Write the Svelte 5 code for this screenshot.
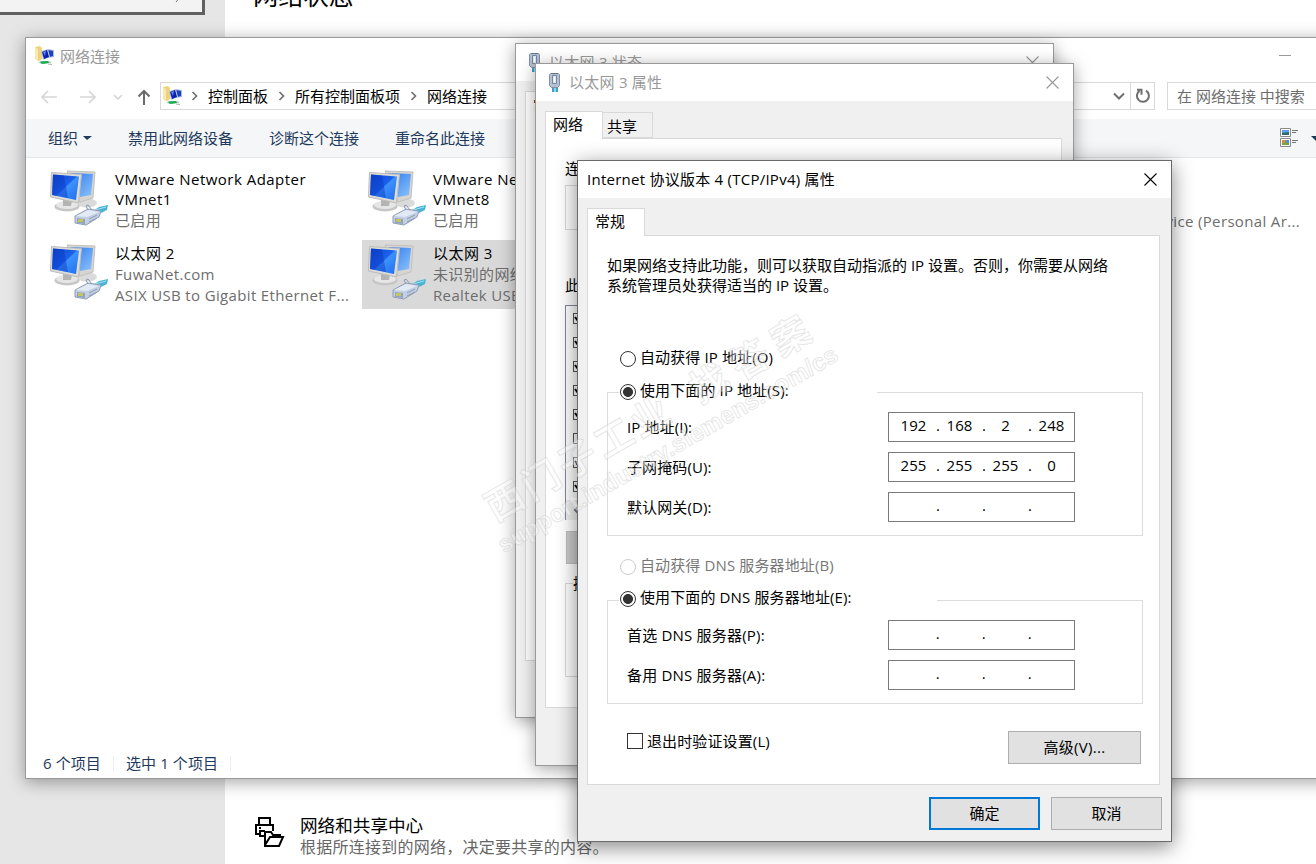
<script>
    const adapters = [
        { col: 1, title: 'VMware Network Adapter VMnet1', lines: ['已启用'] },
        { col: 2, title: 'VMware Network Adapter VMnet8', lines: ['已启用'] },
        { col: 4, title: '蓝牙网络连接', lines: ['未连接', 'Bluetooth Device (Personal Ar...'] },
        { col: 1, title: '以太网 2', lines: ['FuwaNet.com', 'ASIX USB to Gigabit Ethernet F...'] },
        { col: 2, title: '以太网 3', lines: ['未识别的网络', 'Realtek USB GbE Family Contr...'] }
    ];

    let selected = $state('以太网 3');

    const crumbs = ['控制面板', '所有控制面板项', '网络连接'];
    const commands = ['禁用此网络设备', '诊断这个连接', '重命名此连接'];
    const components = [true, true, true, true, true, false, true, true];

    let ipMode = $state('manual');
    let dnsMode = $state('manual');
    let validate = $state(false);

    const ipFields = [
        { label: 'IP 地址(I):', parts: ['192', '168', '2', '248'] },
        { label: '子网掩码(U):', parts: ['255', '255', '255', '0'] },
        { label: '默认网关(D):', parts: ['', '', '', ''] }
    ];
    const dnsFields = [
        { label: '首选 DNS 服务器(P):', parts: ['', '', '', ''] },
        { label: '备用 DNS 服务器(A):', parts: ['', '', '', ''] }
    ];
</script>

{#snippet folderIcon()}
    <svg width="20" height="20" viewBox="0 0 20 20">
        <path d="M0 1l5-1 2 2v11l-3 2-4-2z" fill="#ecd27a" />
        <path d="M0 1l3 2v12l-3-2z" fill="#f8e9ae" />
        <path d="M12 3l7 1v7l-6 1z" fill="#a9bbd6" />
        <path d="M13 4l5 1v5l-4 1z" fill="#1c3fc4" />
        <path d="M6 5l7-2 2 8-7 3z" fill="#b9c8df" />
        <path d="M7 6l5-2 2 7-5 2z" fill="#0a1fae" />
        <path d="M8 6l3-1-1 5z" fill="#5c86ee" />
        <path d="M3 16l6-1 5 0 3 1-2 1-9 1z" fill="#bcc5c9" />
        <path d="M5 15.500l8-.500 1 2-7 1z" fill="#12b04a" />
        <path d="M13 18l4 .500" stroke="#a8b3bb" />
    </svg>
{/snippet}

{#snippet plugIcon()}
    <svg width="14" height="20" viewBox="0 0 14 20">
        <path d="M4 14h6v6H4z" fill="#3d9fc4" />
        <path d="M6 14h2v6H6z" fill="#8fd6ee" />
        <path d="M1.500 2.500l1-1h8l1 1v11l-2 2h-6l-2-2z" fill="#b4c1d3" stroke="#8390a4" />
        <path d="M4.500 3.500h4v8h-4z" fill="#dfe7f1" stroke="#7686a0" />
        <path d="M6.500 5v5" stroke="#fff" />
        <path d="M3 1.500h7" stroke="#66748a" />
    </svg>
{/snippet}

{#snippet adapterIcon()}
    <svg class="adapter__icon" width="62" height="60" viewBox="0 0 62 60">
        <defs>
            <linearGradient id="screen" x1="0" y1="0" x2="1" y2="1">
                <stop offset="0" stop-color="#1246c8" />
                <stop offset=".48" stop-color="#1a62ec" />
                <stop offset=".52" stop-color="#3d92fb" />
                <stop offset="1" stop-color="#1f6df0" />
            </linearGradient>
            <linearGradient id="back" x1="0" y1="0" x2="1" y2="1">
                <stop offset="0" stop-color="#2c77ee" />
                <stop offset="1" stop-color="#8dc4fb" />
            </linearGradient>
        </defs>
        <ellipse cx="39" cy="34" rx="10" ry="4.500" fill="#dadada" />
        <path d="M19 2l28 1-2 26-13 4z" fill="#d6d5d2" stroke="#c2c1be" />
        <path d="M22 4l23 1-2 21-11 2z" fill="url(#back)" />
        <ellipse cx="19" cy="37.500" rx="12.500" ry="5" fill="#c6c6c7" />
        <ellipse cx="19" cy="36" rx="11" ry="4" fill="#e6e6e7" />
        <path d="M15 30l9 2-1 5h-8z" fill="#b4b4b5" />
        <path d="M3.500 3.500l30 2-3 28.500-28-6z" fill="#dddcd9" stroke="#bdbcba" />
        <path d="M5 5.500l26 2-3 23.500-24-5z" fill="url(#screen)" />
        <path d="M5 5.500l11 1 4 22.500-16-3z" fill="#0936c4" opacity=".45" />
        <path d="M45 42l6-4 9-2-1 5-8 4z" fill="#49b5d6" />
        <path d="M47 41l11-3" stroke="#a4e1f1" />
        <path d="M27 47l13-7 13 2-2 6-13 8-11-2z" fill="#c3cfe2" stroke="#909eb6" />
        <path d="M28 47l12-6 11 2-12 5z" fill="#e2eaf5" />
        <path d="M29 49l8 1v5l-8-1z" fill="#93a3bf" />
        <path d="M30 50h5v3h-5z" fill="#c3c65a" />
        <path d="M40 41l-2-4 2-1 4 5M41 50l8-4M41 53l8-4" fill="none" stroke="#8b9bb5" />
    </svg>
{/snippet}

{#snippet closeIcon()}
    <svg width="13" height="13" viewBox="0 0 13 13">
        <path d="M.500 .500l12 12M12.500 .500l-12 12" stroke="currentColor" stroke-width="1.100" />
    </svg>
{/snippet}

{#snippet chevron()}
    <svg class="chevron" width="27" height="12" viewBox="0 0 27 12">
        <path d="M11.500 2l4 4-4 4" fill="none" stroke="#707070" stroke-width="1.700" />
    </svg>
{/snippet}

{#snippet addressField(field)}
    <div class="field">
        <span>{field.label}</span>
        <div class="ip">
            {#each field.parts as part, i}
                {#if i > 0}<i>.</i>{/if}
                <b>{part}</b>
            {/each}
        </div>
    </div>
{/snippet}

<main class="desktop">
    <!-- Página de configuración detrás de las ventanas -->
    <aside class="settings__side">
        <div class="settings__search">
            <svg width="8" height="8" viewBox="0 0 8 8"><path d="M1 7l5-6" stroke="#777" /></svg>
        </div>
    </aside>
    <section class="settings__page">
        <h1>网络状态</h1>
        <div class="settings__link">
            <svg width="32" height="32" viewBox="0 0 32 32" fill="none" stroke="#000" stroke-width="2">
                <path d="M6 9V2h11v7M6 18H3V9h17v6M6 15h6M7 15v5h5" />
                <path d="M6 12h2" />
                <path d="M12 29V16h6l2 3h7v3M12 29l5-8h13l-4 9H12z" />
            </svg>
            <div>
                <h2>网络和共享中心</h2>
                <p>根据所连接到的网络，决定要共享的内容。</p>
            </div>
        </div>
    </section>

    <div class="window explorer">
        <header class="explorer__title">
            {@render folderIcon()}
            <span>网络连接</span>
            <i class="minimize"></i>
        </header>
        <nav class="explorer__nav">
            <svg class="arrows" width="110" height="20" viewBox="0 0 110 20" fill="none" stroke-width="1.700">
                <path d="M17 11H2M8 5l-6 6 6 6" stroke="#d6d6d6" />
                <path d="M40 11h15M49 5l6 6-6 6" stroke="#d6d6d6" />
                <path d="M74 9l4 4 4-4" stroke="#d6d6d6" />
                <path d="M104 19V5M98.500 10.500L104 5l5.500 5.500" stroke="#6b6b6b" stroke-width="2" />
            </svg>
            <div class="address">
                {@render folderIcon()}
                {#each crumbs as crumb}
                    {@render chevron()}
                    <span>{crumb}</span>
                {/each}
                <svg class="address__drop" width="12" height="8" viewBox="0 0 12 8">
                    <path d="M1 1.500l5 5 5-5" fill="none" stroke="#707070" stroke-width="2" />
                </svg>
                <div class="refresh">
                    <svg width="16" height="16" viewBox="0 0 16 16" fill="none" stroke="#6f6f6f" stroke-width="2">
                        <path d="M11 2.700a6 6 0 1 1-6.500 .200M2 1.800h4.500v5" />
                    </svg>
                </div>
            </div>
            <div class="search">在 网络连接 中搜索</div>
        </nav>
        <div class="explorer__commands">
            <span>组织<i class="caret"></i></span>
            {#each commands as command}
                <span>{command}</span>
            {/each}
            <svg class="view" width="19" height="19" viewBox="0 0 19 19">
                <path d="M.500 .500h10v8H.500zM.500 10.500h10v8H.500z" fill="#fff" stroke="#8a8a8a" />
                <path d="M2 2h7v5H2z" fill="#5aa0e8" />
                <path d="M2 5l7-1v3H2z" fill="#2d6a6c" />
                <path d="M2 12h7v5H2z" fill="#70a844" />
                <path d="M2 12h3v3H2z" fill="#e08a3c" />
                <path d="M6 12h3v3H6z" fill="#5a8be0" />
                <path d="M12 2.500h6M12 4.500h4M12 12.500h6M12 14.500h4" stroke="#777" />
            </svg>
            <i class="caret"></i>
        </div>
        <div class="adapters">
            {#each adapters as adapter}
                <!-- svelte-ignore a11y_click_events_have_key_events, a11y_no_static_element_interactions -->
                <div
                    class="adapter col{adapter.col}"
                    class:selected={selected === adapter.title}
                    onclick={() => (selected = adapter.title)}
                >
                    {@render adapterIcon()}
                    <div class="adapter__text">
                        <strong>{adapter.title}</strong>
                        {#each adapter.lines as line}
                            <span>{line}</span>
                        {/each}
                    </div>
                </div>
            {/each}
        </div>
        <footer class="explorer__status">
            <span>6 个项目</span>
            <span>选中 1 个项目</span>
        </footer>
    </div>

    <div class="window dialog status">
        <header class="dialog__title">
            {@render plugIcon()}
            <span>以太网 3 状态</span>
            {@render closeIcon()}
        </header>
        <div class="sheet"><span>常规</span></div>
    </div>

    <div class="window dialog props">
        <header class="dialog__title">
            {@render plugIcon()}
            <span>以太网 3 属性</span>
            {@render closeIcon()}
        </header>
        <div class="tabs">
            <span class="tab active">网络</span>
            <span class="tab">共享</span>
        </div>
        <div class="sheet">
            <p>连接时使用:</p>
            <div class="device"></div>
            <p class="uses">此连接使用下列项目(O):</p>
            <div class="components">
                {#each components as checked}
                    <div class="tick">
                        {#if checked}
                            <svg width="9" height="9" viewBox="0 0 9 9"><path d="M1 3l3 4 4-6" fill="none" stroke="#000" stroke-width="2" /></svg>
                        {/if}
                    </div>
                {/each}
                <div class="scroll">
                    <svg width="8" height="10" viewBox="0 0 8 10"><path d="M6 1L2 5l4 4" fill="none" stroke="#777" stroke-width="2" /></svg>
                </div>
            </div>
            <div class="install"></div>
            <div class="describe"><span>描述</span></div>
        </div>
    </div>

    <div class="window dialog tcp">
        <header class="dialog__title">
            <span>Internet 协议版本 4 (TCP/IPv4) 属性</span>
            {@render closeIcon()}
        </header>
        <div class="tabs">
            <span class="tab active">常规</span>
        </div>
        <div class="sheet">
            <p class="intro">
                如果网络支持此功能，则可以获取自动指派的 IP 设置。否则，你需要从网络<br />系统管理员处获得适当的 IP 设置。
            </p>
            <label class="radio">
                <input type="radio" value="auto" bind:group={ipMode} />自动获得 IP 地址(O)
            </label>
            <fieldset class="group--ip">
                <legend>
                    <label class="radio">
                        <input type="radio" value="manual" bind:group={ipMode} />使用下面的 IP 地址(S):
                    </label>
                </legend>
                {#each ipFields as field}
                    {@render addressField(field)}
                {/each}
            </fieldset>
            <label class="radio disabled">
                <input type="radio" value="auto" disabled bind:group={dnsMode} />自动获得 DNS 服务器地址(B)
            </label>
            <fieldset class="group--dns">
                <legend>
                    <label class="radio">
                        <input type="radio" value="manual" bind:group={dnsMode} />使用下面的 DNS 服务器地址(E):
                    </label>
                </legend>
                {#each dnsFields as field}
                    {@render addressField(field)}
                {/each}
            </fieldset>
            <div class="options">
                <label class="check"><input type="checkbox" bind:checked={validate} />退出时验证设置(L)</label>
                <button class="advanced">高级(V)...</button>
            </div>
        </div>
        <div class="actions">
            <button class="primary">确定</button>
            <button>取消</button>
        </div>
    </div>

    <svg class="watermark" width="400" height="300" viewBox="0 0 400 300">
        <g transform="translate(26 229) rotate(-30)">
            <text x="-1" y="-8" font-size="38" textLength="206">西门子工业</text>
            <text x="235" y="-8" font-size="38" textLength="132">找答案</text>
            <text class="url" x="-9" y="23" font-size="24" textLength="388">support.industry.siemens.com/cs</text>
        </g>
    </svg>
</main>

<style>
    :global(body) {
        margin: 0;
        overflow: hidden;
    }

    .desktop {
        position: relative;
        display: flex;
        width: 1316px;
        height: 864px;
        overflow: hidden;
        background: #fff;
        color: #000;
        font: 15px/20px "Open Sans", "Noto Sans CJK SC", sans-serif;
    }

    .desktop * {
        box-sizing: border-box;
    }

    .desktop svg {
        display: block;
        flex: none;
    }

    h1,
    h2,
    p {
        margin: 0;
        font-weight: 400;
    }

    i,
    b,
    strong {
        font-style: normal;
        font-weight: 400;
    }

    /* Configuración */

    .settings__side {
        width: 225px;
        background: #e6e6e6;
    }

    .settings__search {
        display: flex;
        justify-content: flex-end;
        width: 205px;
        height: 15px;
        padding: 0 19px;
        background: #f3f3f3;
        border: solid #606060;
        border-width: 0 3px 3px 0;
    }

    .settings__search svg {
        margin-top: -5px;
    }

    .settings__page {
        flex: 1;
        display: flex;
        flex-direction: column;
        justify-content: space-between;
        padding: 0 28px 6px;
    }

    h1 {
        margin-top: -22px;
        font-size: 25.200px;
        line-height: 34px;
    }

    .settings__link {
        display: flex;
        gap: 15px;
    }

    .settings__link svg {
        margin-top: 2px;
    }

    h2 {
        font-size: 17.600px;
        line-height: 22px;
    }

    .settings__link p {
        color: #666;
        font-size: 16px;
        line-height: 22px;
        letter-spacing: .25px;
    }

    /* Ventanas */

    .window {
        position: absolute;
        display: flex;
        flex-direction: column;
        background: #fff;
        border: 1px solid #999;
        box-shadow: 0 3px 16px rgba(0, 0, 0, .36);
    }

    .explorer {
        left: 25px;
        top: 37px;
        width: 1350px;
        height: 742px;
    }

    .explorer__title {
        display: flex;
        align-items: center;
        gap: 5px;
        height: 37px;
        padding: 0 0 2px 9px;
        color: #999;
    }

    .minimize {
        width: 12px;
        height: 1px;
        margin: -1px 0 0 1154px;
        background: #999;
    }

    .explorer__nav {
        display: flex;
        align-items: center;
        height: 44px;
        padding: 0 0 2px 14px;
    }

    .arrows {
        width: 110px;
        margin-right: 10px;
    }

    .address {
        display: flex;
        align-items: center;
        width: 995px;
        height: 28px;
        padding-left: 2px;
        border: 1px solid #d9d9d9;
    }

    .address > svg:first-child {
        margin-right: -2px;
    }

    .address > span {
        padding-bottom: 1px;
    }

    .address__drop {
        margin-left: auto;
    }

    .refresh {
        display: flex;
        align-items: center;
        justify-content: center;
        width: 24px;
        height: 26px;
        margin-left: 5px;
        border-left: 1px solid #d9d9d9;
    }

    .search {
        width: 180px;
        height: 28px;
        margin-left: 12px;
        padding: 3px 9px;
        border: 1px solid #d9d9d9;
        color: #6d6d6d;
    }

    .explorer__commands {
        display: flex;
        align-items: center;
        gap: 36px;
        height: 39px;
        padding-left: 22px;
        background: #f4f6f8;
        border-bottom: 1px solid #e2e7ec;
        color: #1e395b;
    }

    .explorer__commands span {
        display: flex;
        align-items: center;
        gap: 5px;
    }

    .caret {
        border: 5px solid transparent;
        border-top-color: #1e395b;
        border-bottom: 0;
    }

    .explorer__commands span .caret {
        border-width: 4px 5px 0 4px;
    }

    .view {
        margin: -2px 0 0 759px;
    }

    .view + .caret {
        margin-left: -24px;
    }

    .adapters {
        flex: 1;
        display: grid;
        grid-template-columns: repeat(4, 318px);
        grid-auto-rows: 69px;
        align-content: start;
        row-gap: 5px;
        padding: 8px 0 0 18px;
    }

    .adapter {
        display: flex;
        gap: 5px;
        padding: 3px 0 0 4px;
    }

    .adapter.selected {
        background: #d9d9d9;
    }

    .adapter.col2 {
        grid-column: 2;
    }

    .adapter.col4 {
        grid-column: 4;
    }

    .adapter__text {
        display: flex;
        flex-direction: column;
        width: 240px;
        line-height: 21px;
        white-space: nowrap;
    }

    .adapter__text strong {
        max-width: 205px;
        margin-bottom: 1px;
        line-height: 20px;
        white-space: normal;
        letter-spacing: .48px;
    }

    .adapter__text span {
        color: #6d6d6d;
        letter-spacing: .35px;
    }

    .explorer__status {
        display: flex;
        align-items: center;
        height: 30px;
        padding-left: 17px;
        color: #1e395b;
        letter-spacing: .1px;
    }

    .explorer__status span {
        margin-right: 12px;
        padding-right: 12px;
        line-height: 15px;
        border-right: 1px solid #eee;
    }

    /* Cuadros de diálogo */

    .dialog {
        background: #f0f0f0;
        letter-spacing: .12px;
    }

    .dialog__title {
        display: flex;
        align-items: center;
        height: 37px;
        padding: 0 14px 2px 12px;
        background: #fff;
        color: #999;
    }

    .dialog__title svg:last-child {
        margin: 1px 0 0 auto;
    }

    .dialog__title span {
        padding-left: 7px;
        letter-spacing: .25px;
    }

    .tabs {
        display: flex;
        align-items: flex-end;
        padding-left: 9px;
    }

    .tab {
        width: 50px;
        height: 26px;
        padding: 3px 4px;
        border: 1px solid #d9d9d9;
        border-left: 0;
        letter-spacing: 0;
    }

    .tab.active {
        position: relative;
        width: 58px;
        height: 28px;
        margin-bottom: -1px;
        padding: 2px 7px;
        background: #fff;
        border: 1px solid #d9d9d9;
        border-bottom: 0;
    }

    .sheet {
        background: #fff;
        border: 1px solid #d9d9d9;
    }

    .status {
        left: 515px;
        top: 43px;
        width: 539px;
        height: 675px;
    }

    .status .sheet {
        width: 517px;
        height: 570px;
        margin: 10px 0 0 9px;
        padding: 2px 7px;
    }

    .props {
        left: 535px;
        top: 63px;
        width: 539px;
        height: 703px;
    }

    .props .tabs {
        margin-top: 10px;
    }

    .props .sheet {
        width: 517px;
        height: 570px;
        margin-left: 9px;
        padding: 19px 19px;
    }

    .device {
        height: 45px;
        margin-top: 7px;
        border: 1px solid #d9d9d9;
    }

    .uses {
        margin: 45px 0 10px;
    }

    .components {
        display: flex;
        flex-direction: column;
        gap: 13px;
        height: 215px;
        padding: 7px 7px 0;
        border: 1px solid #82879a;
    }

    .tick {
        width: 11px;
        height: 11px;
        flex: none;
        border: 1px solid #555;
    }

    .scroll {
        margin: -5px -7px 0;
        padding: 5px 7px;
        background: #f0f0f0;
    }

    .install {
        width: 150px;
        height: 33px;
        margin: 11px 0 0 1px;
        background: #ccc;
        border: 1px solid #bfbfbf;
    }

    .describe {
        height: 94px;
        margin-top: 19px;
        padding-left: 7px;
        border: 1px solid #d9d9d9;
    }

    .describe span {
        position: relative;
        top: -11px;
        background: #fff;
    }

    .tcp {
        left: 577px;
        top: 160px;
        width: 595px;
        height: 682px;
        border-color: #6a6a6a;
        box-shadow: 0 5px 20px rgba(0, 0, 0, .48);
    }

    .tcp .dialog__title {
        padding-left: 2px;
        color: #000;
    }

    .tcp .tabs {
        margin-top: 10px;
    }

    .tcp .sheet {
        width: 573px;
        height: 550px;
        margin-left: 9px;
        padding: 19px 16px 0 19px;
    }

    .intro {
        height: 92px;
        white-space: nowrap;
        letter-spacing: 0;
    }

    .radio {
        display: flex;
        align-items: center;
        gap: 4px;
        height: 20px;
        padding-left: 13px;
        white-space: nowrap;
    }

    .radio.disabled {
        color: #777;
    }

    input {
        appearance: none;
        flex: none;
        width: 16px;
        height: 16px;
        margin: 2px 0 0;
        border: 1px solid #333;
        background: #fff;
    }

    input[type="radio"] {
        margin-top: 4px;
        border-radius: 50%;
    }

    input[type="radio"]:checked {
        background: radial-gradient(circle, #333 4.600px, #fff 5.300px);
    }

    input:disabled {
        border-color: #ccc;
    }

    fieldset {
        margin: 13px 0 19px;
        padding: 8px 67px 13px 19px;
        border: 1px solid #dcdcdc;
    }

    legend {
        width: 258px;
        height: 24px;
        margin-left: -8px;
        padding: 0;
        background: #fff;
    }

    legend .radio {
        padding-left: 1px;
    }

    .group--dns {
        margin: 12px 0 20px;
        padding-top: 7px;
    }

    .group--dns legend {
        width: 318px;
        height: 26px;
    }

    .group--dns .field {
        letter-spacing: .2px;
    }

    .field {
        display: flex;
        justify-content: space-between;
        height: 30px;
        line-height: 30px;
    }

    .field + .field {
        margin-top: 10px;
    }

    .ip {
        display: flex;
        width: 187px;
        padding-left: 5px;
        line-height: 25px;
        border: 1px solid #7a7a7a;
    }

    .ip b {
        width: 39px;
        text-align: center;
    }

    .ip i {
        width: 7px;
        text-align: right;
    }

    .options {
        display: flex;
        justify-content: space-between;
        padding: 7px 2px 0 20px;
    }

    .check {
        display: flex;
        gap: 4px;
    }

    button {
        width: 111px;
        height: 33px;
        padding: 0 0 2px;
        background: #e1e1e1;
        border: 1px solid #adadad;
        color: #000;
        font: inherit;
    }

    .advanced {
        width: 133px;
        letter-spacing: .3px;
    }

    .actions {
        display: flex;
        justify-content: flex-end;
        gap: 11px;
        padding: 12px 9px 0;
    }

    .primary {
        border: 2px solid #0078d7;
    }

    /* Marca de agua en diagonal */

    .watermark {
        position: absolute;
        left: 474px;
        top: 300px;
        pointer-events: none;
        fill: rgba(255, 255, 255, .35);
        stroke: rgba(200, 200, 200, .45);
        stroke-width: 1px;
        font-family: "Noto Sans CJK SC", sans-serif;
        font-weight: 700;
    }

    .watermark .url {
        font-family: "Liberation Sans", sans-serif;
    }
</style>
